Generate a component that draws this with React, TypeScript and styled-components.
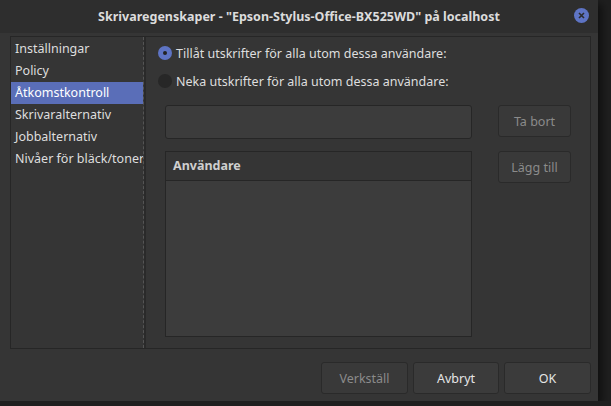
import React from "react"
import styled, { createGlobalStyle } from "styled-components"

const Global = createGlobalStyle`
  html, body { margin: 0; background: #1f1f1f; }
  body { font-family: "Noto Sans", "DejaVu Sans", sans-serif; font-size: 12.5px; color: #dedede; }
`

const Win = styled.div`
  width: 598px;
  height: 401px;
  background: #353535;
  display: flex;
  flex-direction: column;
  box-shadow: 4px 4px 8px rgba(0,0,0,0.5);
`

const TitleBar = styled.div`
  height: 33px;
  background: #2e2e2e;
  display: flex;
  align-items: center;
  justify-content: center;
  position: relative;
  font-weight: bold;
  font-size: 12.5px;
  color: #dcdcdc;
`

const Close = styled.div`
  position: absolute;
  right: 9px;
  top: 8px;
  width: 15px;
  height: 15px;
  border-radius: 50%;
  background: #5e74c4;
  display: flex;
  align-items: center;
  justify-content: center;
`

const Frame = styled.div`
  margin: 3px 7px 0 10px;
  height: 311px;
  border: 1px solid #262626;
  display: flex;
  background: #353535;
`

const Side = styled.div`
  width: 132px;
  padding-top: 1px;
  border-right: 1px dashed #555;
  margin-right: 2px;
  box-shadow: 2px 0 0 #2a2a2a;
`

const SideItem = styled.div<{ $active?: boolean }>`
  height: 22px;
  line-height: 22px;
  padding-left: 4px;
  white-space: nowrap;
  overflow: hidden;
  background: ${p => (p.$active ? "#5a6eb8" : "transparent")};
  color: ${p => (p.$active ? "#fff" : "#dedede")};
`

const Main = styled.div`
  flex: 1;
  padding: 2px 18px 0 12px;
  display: flex;
  flex-direction: column;
`

const RadioRow = styled.div`
  display: flex;
  align-items: center;
  gap: 4px;
  height: 28px;
`

const Radio = styled.div<{ $on?: boolean }>`
  width: 14px;
  height: 14px;
  border-radius: 50%;
  background: ${p => (p.$on ? "#5e74c4" : "#272727")};
  display: flex;
  align-items: center;
  justify-content: center;
  &::after {
    content: "";
    width: 4px;
    height: 4px;
    border-radius: 50%;
    background: ${p => (p.$on ? "#222" : "transparent")};
  }
`

const Grid = styled.div`
  display: grid;
  grid-template-columns: 307px 73px;
  column-gap: 26px;
  row-gap: 12px;
  margin: 10px 0 0 7px;
`

const Entry = styled.div`
  height: 32px;
  background: #3c3c3c;
  border: 1px solid #262626;
  border-radius: 3px;
`

const Btn = styled.div<{ $disabled?: boolean; $w?: number }>`
  height: 32px;
  width: ${p => (p.$w ? p.$w + "px" : "auto")};
  box-sizing: border-box;
  border: 1px solid #2a2a2a;
  border-radius: 3px;
  background: ${p => (p.$disabled ? "#393939" : "#3b3b3b")};
  color: ${p => (p.$disabled ? "#8b8b8b" : "#e6e6e6")};
  display: flex;
  align-items: center;
  justify-content: center;
`

const List = styled.div`
  height: 186px;
  box-sizing: border-box;
  border: 1px solid #262626;
  background: #3c3c3c;
`

const ListHead = styled.div`
  height: 28px;
  line-height: 28px;
  padding-left: 7px;
  background: #353535;
  border-bottom: 1px solid #262626;
  font-weight: bold;
  color: #cfcfcf;
`

const Footer = styled.div`
  display: flex;
  justify-content: flex-end;
  gap: 5px;
  padding: 13px 7px 0 0;
`

export default function App() {
  return (
    <>
      <Global />
      <Win>
        <TitleBar>
          Skrivaregenskaper - "Epson-Stylus-Office-BX525WD" på localhost
          <Close>
            <svg width="7" height="7" viewBox="0 0 7 7">
              <path d="M1 1L6 6M6 1L1 6" stroke="#2b2b2b" strokeWidth="1.6" />
            </svg>
          </Close>
        </TitleBar>
        <Frame>
          <Side>
            <SideItem>Inställningar</SideItem>
            <SideItem>Policy</SideItem>
            <SideItem $active>Åtkomstkontroll</SideItem>
            <SideItem>Skrivaralternativ</SideItem>
            <SideItem>Jobbalternativ</SideItem>
            <SideItem>Nivåer för bläck/toner</SideItem>
          </Side>
          <Main>
            <RadioRow><Radio $on />Tillåt utskrifter för alla utom dessa användare:</RadioRow>
            <RadioRow><Radio />Neka utskrifter för alla utom dessa användare:</RadioRow>
            <Grid>
              <Entry />
              <Btn $disabled>Ta bort</Btn>
              <List><ListHead>Användare</ListHead></List>
              <div><Btn $disabled>Lägg till</Btn></div>
            </Grid>
          </Main>
        </Frame>
        <Footer>
          <Btn $disabled $w={87}>Verkställ</Btn>
          <Btn $w={86}>Avbryt</Btn>
          <Btn $w={87}>OK</Btn>
        </Footer>
      </Win>
    </>
  )
}
